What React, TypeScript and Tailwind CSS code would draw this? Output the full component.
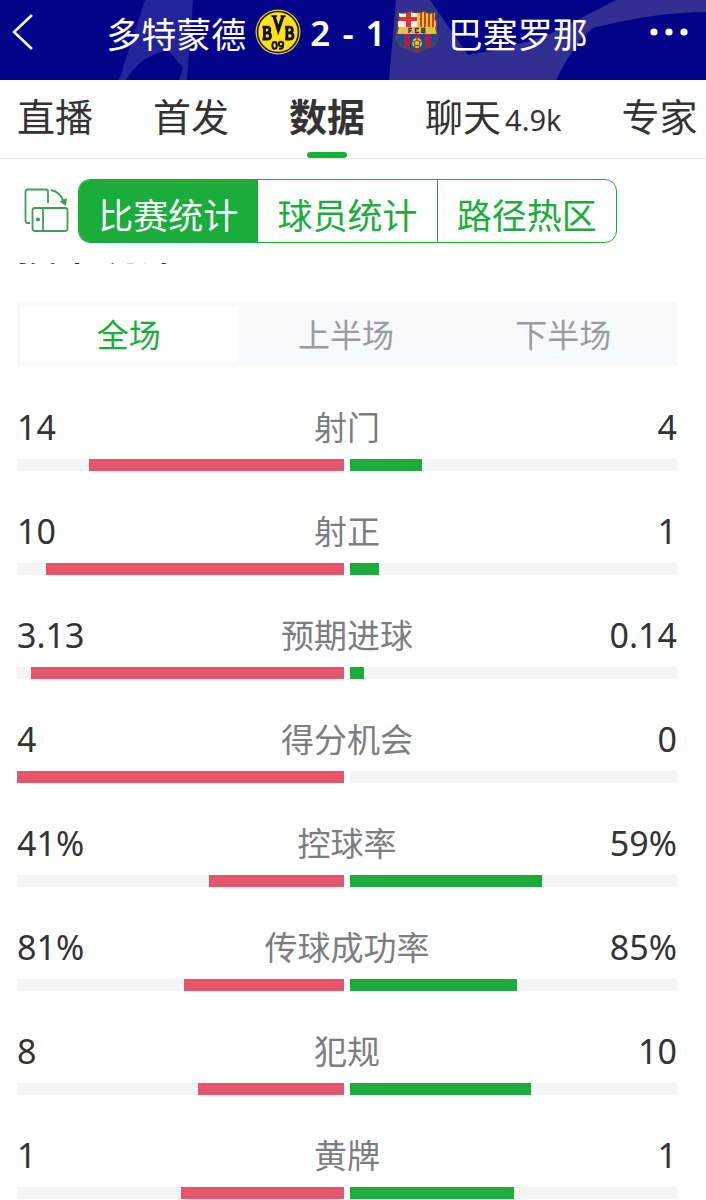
import { useState } from 'react'

// MARK: - Data

const TABS = [
  { id: 'live', label: '直播' },
  { id: 'lineup', label: '首发' },
  { id: 'data', label: '数据' },
  { id: 'chat', label: '聊天', count: '4.9k' },
  { id: 'expert', label: '专家' },
]

const SEGMENTS = ['比赛统计', '球员统计', '路径热区']

const PERIODS = ['全场', '上半场', '下半场']

// Fill values are the share of each side's half track, in percent.
const STATS = [
  { label: '射门', home: '14', away: '4', homeFill: 78, awayFill: 22 },
  { label: '射正', home: '10', away: '1', homeFill: 91, awayFill: 9 },
  { label: '预期进球', home: '3.13', away: '0.14', homeFill: 95.7, awayFill: 4.3 },
  { label: '得分机会', home: '4', away: '0', homeFill: 100, awayFill: 0 },
  { label: '控球率', home: '41%', away: '59%', homeFill: 41.3, awayFill: 58.7 },
  { label: '传球成功率', home: '81%', away: '85%', homeFill: 49, awayFill: 51 },
  { label: '犯规', home: '8', away: '10', homeFill: 44.6, awayFill: 55.4 },
  { label: '黄牌', home: '1', away: '1', homeFill: 50, awayFill: 50 },
]

// MARK: - Crests and icons

function DortmundCrest() {
  return (
    <svg viewBox="0 0 46 46" className="size-[46px] shrink-0" role="img" aria-label="多特蒙德">
      <circle cx="23" cy="23" r="22.5" fill="#e9d21c" />
      <circle cx="23" cy="23" r="20.5" fill="#fde019" stroke="#151515" strokeWidth="1.6" />
      <g fill="none" stroke="#111" strokeWidth="2.8">
        <path d="M9.400 17.500v13M7.500 18.200h4.200c4.200 0 4.200 5.600 0 5.600H9.500M7.500 30h4.600c4.600 0 4.600-6.200 0-6.200" />
        <path d="M31.900 17.500v13M30 18.200h4.200c4.200 0 4.200 5.600 0 5.600H32M30 30h4.600c4.600 0 4.600-6.200 0-6.200" />
        <path d="M19 7l4.300 14L28 7" strokeWidth="3.200" />
      </g>
      <path d="M16.500 7.200h5.500M25.500 7.200h5" stroke="#111" strokeWidth="1.800" />
      <g fill="none" stroke="#111" strokeWidth="2">
        <ellipse cx="19.600" cy="36.400" rx="2.200" ry="3.400" />
        <path d="M28.200 35c0 3-4.400 3-4.400 0s4.400-3 4.400 0c0 4-1 5-4.200 4.800" />
      </g>
    </svg>
  )
}

function BarcelonaCrest() {
  return (
    <svg viewBox="0 0 44 46" className="h-[46px] w-11 shrink-0" role="img" aria-label="巴塞罗那">
      <defs>
        <clipPath id="barca-shield">
          <path d="M3 3c5 2 9 1 12-1 3 2 10 2 14 0 3 2 7 3 12 1l-1 7c3 3 2 6 1 9 2 6 2 13-2 17-4 4-10 3-17 8-7-5-13-4-17-8-4-4-4-11-2-17-1-3-2-6 1-9z" />
        </clipPath>
      </defs>
      <g clipPath="url(#barca-shield)">
        <path fill="#174b93" d="M0 0h44v46H0z" />
        <path fill="#a4213f" d="M9 24h6v22H9zM20 24h5v22h-5zM30 24h6v22h-6z" />
        <path fill="#f3eee4" d="M0 0h22v19H0z" />
        <path fill="#d8343a" d="M11 0h5v19h-5zM0 8h22v4H0z" />
        <path fill="#eac43c" d="M22 0h22v19H22z" />
        <path fill="#c9402f" d="M25 3h2v16h-2zM29 3h2v16h-2zM33 3h2v16h-2zM37 3h2v16h-2z" />
        <path fill="#e2bf3e" d="M0 18h44v7H0z" />
      </g>
      <g fill="none" stroke="#333" strokeWidth="1.4">
        <path d="M17 19.5h-3v4.5M14 21.8h2.4M24 19.5h-3.4v4h3.4M27 19.5h2.6v4H27zM27 21.5h2.6" />
      </g>
      <circle cx="22" cy="34" r="5" fill="#e5bd39" />
      <path d="M22 31l3 2-1 3.500h-4l-1-3.500zM22 31v-2M25 33l2-1M24 36.500l1 2M20 36.500l-1 2M19 33l-2-1" fill="none" stroke="#4c4525" />
      <path
        d="M3 3c5 2 9 1 12-1 3 2 10 2 14 0 3 2 7 3 12 1l-1 7c3 3 2 6 1 9 2 6 2 13-2 17-4 4-10 3-17 8-7-5-13-4-17-8-4-4-4-11-2-17-1-3-2-6 1-9z"
        fill="none"
        stroke="#5b4a35"
        strokeWidth="1.400"
      />
    </svg>
  )
}

function RotateIcon() {
  return (
    <svg viewBox="1 1 46 46" className="size-[46px]" fill="none" stroke="#3d9f54" strokeWidth="1.800" aria-hidden="true">
      <path d="M7 36H4.500c-1 0-2-1-2-2V4.500c0-1 1-2 2-2H23c1 0 2 1 2 2V16" />
      <rect x="9.500" y="21" width="35" height="23" rx="2.500" />
      <path d="M20 21v23" />
      <circle cx="15" cy="32.500" r="1.200" fill="#3d9f54" />
      <path d="M28 3c6 1 10 5 13 12" />
      <path d="M36.500 14.500l6.500 4.500 1-8z" fill="#3d9f54" stroke="none" />
    </svg>
  )
}

function HeaderArt() {
  return (
    <svg viewBox="0 0 706 80" preserveAspectRatio="none" className="absolute inset-0 size-full" aria-hidden="true">
      <path d="M145 0h48l-6 80h-8l4-12-15-18q-28 6-42 30h-7z" fill="#23239a" />
      <path d="M396 0h34l38 55q40-6 80-20L616 0h90v12q-50 0-113 16-18 14-37 52H389z" fill="#312f92" />
    </svg>
  )
}

// MARK: - Sections

function MatchHeader() {
  return (
    <header className="relative h-20 bg-[#03038a] text-white">
      <HeaderArt />
      <div className="relative grid h-16 grid-cols-[1fr_auto_1fr] items-center pr-4 pl-3">
        <button type="button" aria-label="返回" className="justify-self-start">
          <svg viewBox="0 0 22 38" className="h-[38px] w-[22px]" fill="none" stroke="currentColor" strokeWidth="2.500" aria-hidden="true">
            <path d="M20 2L2 19l18 17" />
          </svg>
        </button>
        <h1 className="flex items-center gap-[9px] pr-2 text-[35px] leading-none">
          <span>多特蒙德</span>
          <DortmundCrest />
          <span className="flex gap-3 font-['Noto_Sans',sans-serif] font-semibold">
            <span>2</span>
            <span>-</span>
            <span>1</span>
          </span>
          <BarcelonaCrest />
          <span>巴塞罗那</span>
        </h1>
        <button type="button" aria-label="更多" className="justify-self-end">
          <svg viewBox="0 0 40 8" className="h-2 w-10" fill="currentColor" aria-hidden="true">
            <circle cx="4" cy="4" r="3.600" />
            <circle cx="19" cy="4" r="3.600" />
            <circle cx="34" cy="4" r="3.600" />
          </svg>
        </button>
      </div>
    </header>
  )
}

function TabBar() {
  const [active, setActive] = useState('data')

  return (
    <nav className="flex h-[79px] gap-[60px] overflow-hidden border-b border-[#e6e6e8] pl-[17px] text-[38px] text-[#333]">
      {TABS.map((tab) => (
        <button
          key={tab.id}
          type="button"
          onClick={() => setActive(tab.id)}
          className={`relative flex shrink-0 items-baseline gap-1 pt-[6px] ${active === tab.id ? 'font-bold' : ''}`}
        >
          {tab.label}
          {tab.count ? <span className="font-['Noto_Sans',sans-serif] text-[29px]">{tab.count}</span> : null}
          {active === tab.id ? (
            <span className="absolute bottom-0 left-1/2 h-[6px] w-10 -translate-x-1/2 rounded-full bg-[#1aad3c]" />
          ) : null}
        </button>
      ))}
    </nav>
  )
}

function SegmentBar() {
  const [active, setActive] = useState(0)

  return (
    <div className="flex items-center gap-2 pt-5 pl-6">
      <button type="button" aria-label="横屏">
        <RotateIcon />
      </button>
      <div className="flex h-16 w-[539px] overflow-hidden rounded-xl border border-[#1aad3c] text-[35px]">
        {SEGMENTS.map((label, index) => (
          <button
            key={label}
            type="button"
            onClick={() => setActive(index)}
            className={`flex-1 border-l border-[#1aad3c] pt-1 leading-none first:border-l-0 ${
              active === index ? 'bg-[#1aad3c] text-white' : 'text-[#1aad3c]'
            }`}
          >
            {label}
          </button>
        ))}
      </div>
    </div>
  )
}

function PeriodTabs() {
  const [active, setActive] = useState(0)

  return (
    <div className="flex h-16 bg-[#f8f9fb] p-1 text-[32px]">
      {PERIODS.map((label, index) => (
        <button
          key={label}
          type="button"
          onClick={() => setActive(index)}
          className={`flex-1 pr-[2px] pb-[2px] leading-none ${
            active === index ? 'bg-white text-[#1aad3c]' : 'text-[#979ca8]'
          }`}
        >
          {label}
        </button>
      ))}
    </div>
  )
}

function StatRow({ stat }: { stat: (typeof STATS)[number] }) {
  return (
    <li>
      <div className="grid grid-cols-[1fr_auto_1fr] text-[33px] leading-[46px] text-[#333]">
        <span className="font-['Noto_Sans',sans-serif] text-[34px] leading-[48px]">{stat.home}</span>
        <span className="text-[#7b7d82]">{stat.label}</span>
        <span className="text-right font-['Noto_Sans',sans-serif] text-[34px] leading-[48px]">{stat.away}</span>
      </div>
      <div className="mt-2 grid grid-cols-2 gap-[6px]">
        <div className="flex h-3 justify-end bg-[#f5f5f5]">
          <div className="bg-[#e8546b]" style={{ width: `${stat.homeFill}%` }} />
        </div>
        <div className="flex h-3 bg-[#f5f5f5]">
          <div className="bg-[#1aad3c]" style={{ width: `${stat.awayFill}%` }} />
        </div>
      </div>
    </li>
  )
}

export default function App() {
  return (
    <div className="bg-white font-['Noto_Sans_CJK_SC',sans-serif]">
      <MatchHeader />
      <TabBar />
      <SegmentBar />
      <main className="pt-5 pr-[29px] pl-[17px]">
        {/* Scrolled up under the segment bar, only its lower edge shows */}
        <div className="flex h-[2px] items-end overflow-hidden text-[40px]">
          <h2 className="leading-[44px] font-medium text-[#333]">技术统计</h2>
        </div>
        <div className="pt-[37px]">
          <PeriodTabs />
        </div>
        <ul className="mt-[37px] space-y-9">
          {STATS.map((stat) => (
            <StatRow key={stat.label} stat={stat} />
          ))}
        </ul>
      </main>
    </div>
  )
}
